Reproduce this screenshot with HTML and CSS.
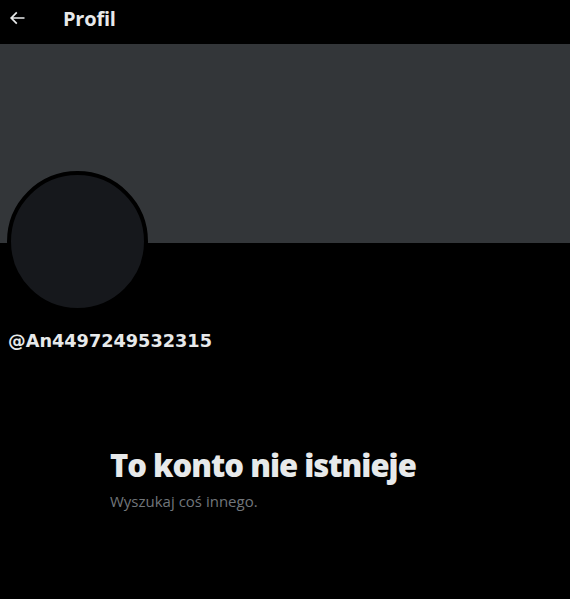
FILE: index.html
```html
<!DOCTYPE html>
<html lang="pl">
<head>
<meta charset="utf-8">
<title>Profil</title>
<link rel="stylesheet" href="styles.css">
</head>
<body>
<div class="page">
  <header class="topbar">
    <span class="back">
      <svg viewBox="0 0 24 24" width="20" height="20"><path fill="#e7e9ea" d="M7.414 13l5.043 5.04-1.414 1.42L3.586 12l7.457-7.46 1.414 1.42L7.414 11H21v2H7.414z"/></svg>
    </span>
    <h1 class="title">Profil</h1>
  </header>
  <div class="banner"></div>
  <div class="profile">
    <div class="avatar"></div>
    <div class="handle">@An4497249532315</div>
  </div>
  <div class="empty">
    <div class="empty-inner">
      <h2 class="empty-title">To konto nie istnieje</h2>
      <p class="empty-sub">Wyszukaj coś innego.</p>
    </div>
  </div>
</div>
</body>
</html>
```

FILE: styles.css
```css
html, body {
  margin: 0;
  padding: 0;
  background: #000;
}
body {
  font-family: "Liberation Sans", Arial, sans-serif;
  color: #e7e9ea;
}
.page {
  width: 570px;
  min-height: 599px;
  background: #000;
}
.topbar {
  height: 44px;
  display: flex;
  align-items: center;
  padding-left: 7px;
  box-sizing: border-box;
}
.back {
  width: 20px;
  height: 20px;
  display: flex;
  margin-top: -8px;
}
.title {
  margin: 0 0 0 36px;
  font-size: 20px;
  font-weight: 700;
  font-family: "Open Sans", "Liberation Sans", sans-serif;
  margin-top: -7px;
  letter-spacing: -0.2px;
}
.banner {
  height: 199px;
  background: #333639;
}
.profile {
  padding: 0 8px;
}
.avatar {
  width: 133px;
  height: 133px;
  border: 4px solid #000;
  border-radius: 50%;
  background: #16181c;
  margin-top: -72px;
  margin-left: -1px;
}
.handle {
  margin-top: 17px;
  font-family: "DejaVu Sans", sans-serif;
  font-size: 17.7px;
  font-weight: 700;
  line-height: 24px;
}
.empty {
  display: flex;
  justify-content: center;
  padding-top: 94px;
}
.empty-inner {
  width: 350px;
}
.empty-title {
  margin: 0;
  font-family: "Open Sans", sans-serif;
  font-size: 31px;
  font-weight: 800;
  line-height: 36px;
  letter-spacing: -1px;
}
.empty-sub {
  margin: 8px 0 0;
  font-family: "Open Sans", sans-serif;
  font-size: 15px;
  line-height: 20px;
  color: #71767b;
}
```
